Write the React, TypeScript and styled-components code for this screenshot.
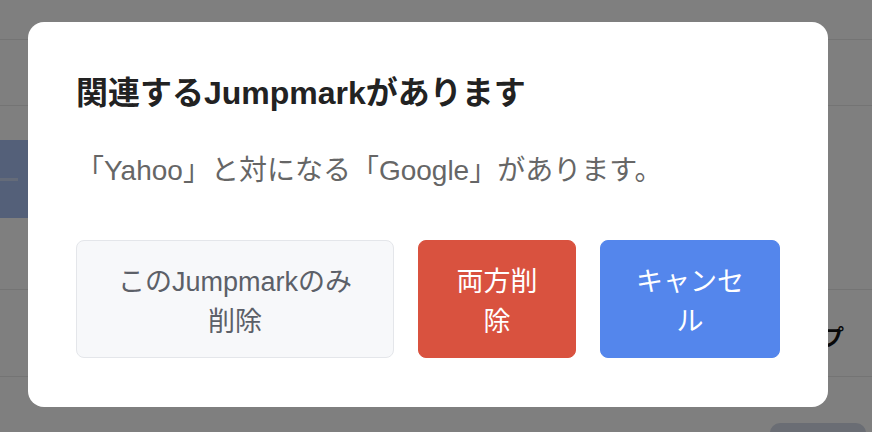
import React from "react";
import styled, { createGlobalStyle } from "styled-components";

const GlobalStyle = createGlobalStyle`
  html, body {
    margin: 0;
    padding: 0;
    background: #ffffff;
    font-family: "Liberation Sans", "Noto Sans CJK JP", sans-serif;
  }
  * { box-sizing: border-box; }
`;

const Page = styled.div`
  width: 872px;
  height: 432px;
  overflow: hidden;
  background: #ffffff;
  display: flex;
  flex-direction: column;
`;

const Row = styled.div<{ $h: number }>`
  height: ${(p) => p.$h}px;
  flex: none;
  border-bottom: 1px solid #e9e9e9;
  display: flex;
  align-items: center;
`;

const Plain = styled.div<{ $h: number }>`
  height: ${(p) => p.$h}px;
  flex: none;
  display: flex;
  align-items: flex-start;
`;

const SelectedItem = styled.div`
  width: 120px;
  height: 78px;
  background: #a9c0f2;
  display: flex;
  align-items: center;
`;

const Dash = styled.div`
  width: 18px;
  height: 3px;
  background: #c9d6f2;
`;

const RowLabel = styled.span`
  margin-left: auto;
  margin-right: 28px;
  margin-top: 4px;
  font-size: 22px;
  font-weight: 700;
  color: #111;
`;

const Pill = styled.div`
  margin-left: auto;
  margin-right: 6px;
  margin-top: 46px;
  width: 96px;
  height: 30px;
  border-radius: 10px;
  background: #d4dbe8;
`;

const Overlay = styled.div`
  position: fixed;
  inset: 0;
  background: rgba(0, 0, 0, 0.5);
  display: flex;
  align-items: center;
  justify-content: center;
  padding: 0 16px 4px 0;
`;

const Modal = styled.div`
  width: 800px;
  flex: none;
  background: #ffffff;
  border-radius: 16px;
  padding: 49px 48px 49px;
  display: flex;
  flex-direction: column;
`;

const Title = styled.h2`
  margin: 0;
  font-size: 32px;
  line-height: 45px;
  font-weight: 700;
  color: #222222;
`;

const Message = styled.p`
  margin: 35px 0 0;
  font-size: 28px;
  line-height: 39px;
  color: #666666;
`;

const Actions = styled.div`
  margin-top: 50px;
  display: flex;
  gap: 24px;
`;

const variants = {
  plain: { bg: "#f7f8fa", border: "#e4e6ea", color: "#5c6068" },
  danger: { bg: "#d9523f", border: "#d9523f", color: "#ffffff" },
  primary: { bg: "#5486ec", border: "#5486ec", color: "#ffffff" },
};

const Button = styled.button<{ $w: number; $v: keyof typeof variants }>`
  width: ${(p) => p.$w}px;
  flex: none;
  padding: 21px 32px 15px;
  border-radius: 8px;
  border: 1.5px solid ${(p) => variants[p.$v].border};
  background: ${(p) => variants[p.$v].bg};
  color: ${(p) => variants[p.$v].color};
  font-family: inherit;
  font-size: 27px;
  line-height: 40px;
  text-align: center;
  cursor: pointer;
`;

export default function App() {
  return (
    <>
      <GlobalStyle />
      <Page>
        <Row $h={40} />
        <Row $h={66} />
        <Plain $h={34} />
        <SelectedItem>
          <Dash />
        </SelectedItem>
        <Row $h={72} />
        <Row $h={87}>
          <RowLabel>グループ</RowLabel>
        </Row>
        <Plain $h={55}>
          <Pill />
        </Plain>
      </Page>
      <Overlay>
        <Modal role="dialog">
          <Title>関連するJumpmarkがあります</Title>
          <Message>「Yahoo」と対になる「Google」があります。</Message>
          <Actions>
            <Button $w={318} $v="plain">このJumpmarkのみ削除</Button>
            <Button $w={158} $v="danger">両方削除</Button>
            <Button $w={180} $v="primary">キャンセル</Button>
          </Actions>
        </Modal>
      </Overlay>
    </>
  );
}
